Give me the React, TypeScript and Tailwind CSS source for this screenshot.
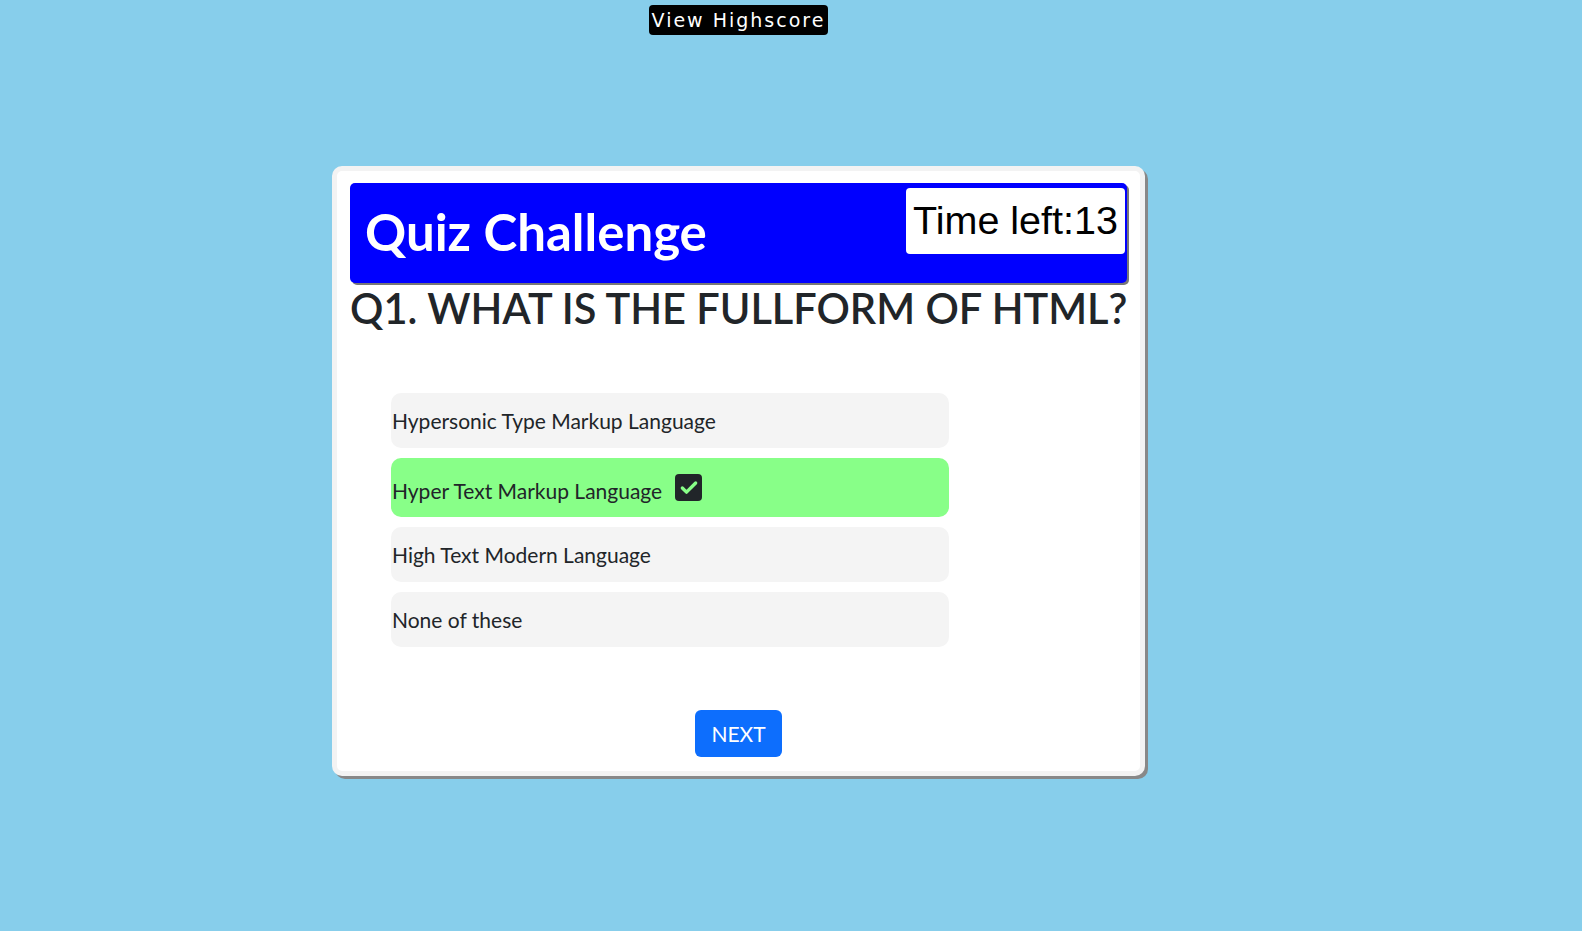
import { Check } from "lucide-react";

const options = [
  { text: "Hypersonic Type Markup Language", correct: false },
  { text: "Hyper Text Markup Language", correct: true },
  { text: "High Text Modern Language", correct: false },
  { text: "None of these", correct: false },
];

export default function App() {
  return (
    <div className="min-h-[931px] bg-[#87ceeb] font-['Lato',sans-serif] text-[#212529]">
      <div className="flex w-[1477px] flex-col items-center">
        <button className="mt-[5px] rounded-[4px] bg-black px-[3px] font-['DejaVu_Sans',sans-serif] text-[19px] leading-[30px] tracking-[2px] text-white">
          View Highscore
        </button>

        <div className="mt-[131px] w-[813px] rounded-[10px] border-[5px] border-[#f3f3f3] bg-white px-[13px] pt-[12px] pb-[14px] shadow-[3px_3px_0_#888]">
          <div className="flex h-[100px] items-start justify-between rounded-[5px] bg-[#0000ff] pl-[15px] shadow-[2px_2px_0_#777]">
            <h1 className="mt-[12px] text-[51px] leading-[74px] font-bold whitespace-nowrap text-white">Quiz Challenge</h1>
            <div className="mt-[5px] mr-[2px] flex h-[66px] w-[219px] items-center justify-center rounded-[4px] bg-white font-['Liberation_Sans',sans-serif] text-[39.5px] text-black">
              Time left:13
            </div>
          </div>

          <h2 className="mt-[1px] text-[41.5px] leading-[48px] font-semibold whitespace-nowrap">Q1. WHAT IS THE FULLFORM OF HTML?</h2>

          <div className="mt-[61px] ml-[41px] flex w-[558px] flex-col gap-[10px]">
            {options.map((o) => (
              <div
                key={o.text}
                className={
                  o.correct
                    ? "flex h-[59px] items-center gap-[13px] rounded-[10px] bg-[#88ff88] pl-[1px] text-[21px]"
                    : "flex h-[55px] items-center rounded-[10px] bg-[#f4f4f4] pl-[1px] text-[21px]"
                }
              >
                <span className={o.correct ? "mt-[6px]" : ""}>{o.text}</span>
                {o.correct && (
                  <span className="flex h-[27px] w-[27px] items-center justify-center rounded-[4px] bg-[#212529]">
                    <Check size={20} strokeWidth={4} className="text-[#88ff88]" />
                  </span>
                )}
              </div>
            ))}
          </div>

          <div className="mt-[63px] flex justify-center">
            <button className="h-[47px] w-[87px] rounded-[6px] bg-[#0d6efd] text-[21px] text-white">NEXT</button>
          </div>
        </div>
      </div>
    </div>
  );
}
